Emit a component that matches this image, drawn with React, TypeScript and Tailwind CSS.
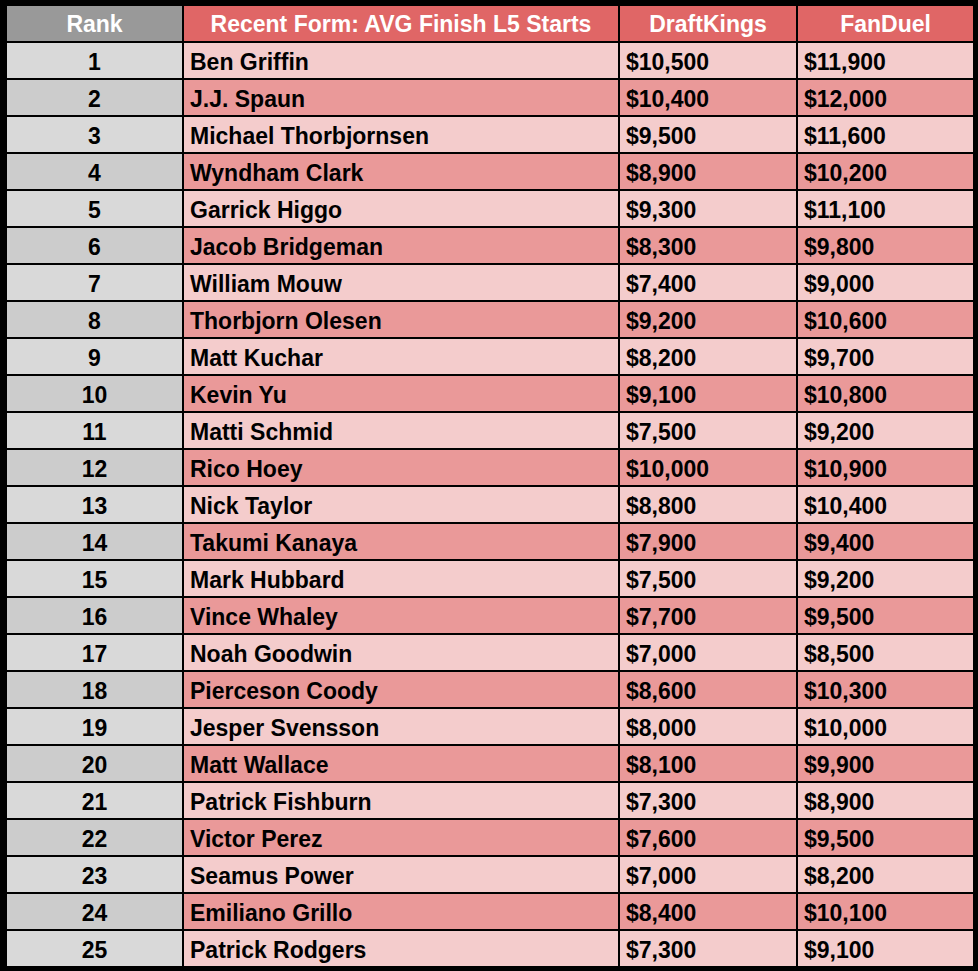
import React from 'react';

const players: [string, string, string][] = [
  ['Ben Griffin', '$10,500', '$11,900'],
  ['J.J. Spaun', '$10,400', '$12,000'],
  ['Michael Thorbjornsen', '$9,500', '$11,600'],
  ['Wyndham Clark', '$8,900', '$10,200'],
  ['Garrick Higgo', '$9,300', '$11,100'],
  ['Jacob Bridgeman', '$8,300', '$9,800'],
  ['William Mouw', '$7,400', '$9,000'],
  ['Thorbjorn Olesen', '$9,200', '$10,600'],
  ['Matt Kuchar', '$8,200', '$9,700'],
  ['Kevin Yu', '$9,100', '$10,800'],
  ['Matti Schmid', '$7,500', '$9,200'],
  ['Rico Hoey', '$10,000', '$10,900'],
  ['Nick Taylor', '$8,800', '$10,400'],
  ['Takumi Kanaya', '$7,900', '$9,400'],
  ['Mark Hubbard', '$7,500', '$9,200'],
  ['Vince Whaley', '$7,700', '$9,500'],
  ['Noah Goodwin', '$7,000', '$8,500'],
  ['Pierceson Coody', '$8,600', '$10,300'],
  ['Jesper Svensson', '$8,000', '$10,000'],
  ['Matt Wallace', '$8,100', '$9,900'],
  ['Patrick Fishburn', '$7,300', '$8,900'],
  ['Victor Perez', '$7,600', '$9,500'],
  ['Seamus Power', '$7,000', '$8,200'],
  ['Emiliano Grillo', '$8,400', '$10,100'],
  ['Patrick Rodgers', '$7,300', '$9,100'],
];

const App: React.FC = () => {
  return (
    <div className="w-[978px] h-[971px] bg-black pt-[6px] pl-[7px] pr-[5px] pb-[5px] font-['Liberation_Sans',Arial,sans-serif] font-bold text-[23px] leading-none">
      <div className="grid grid-cols-[175px_434px_176px_175px] auto-rows-[35px] gap-[2px]">
        <div className="bg-[#999999] text-white flex items-center justify-center pt-[1px]">Rank</div>
        <div className="bg-[#e06666] text-white flex items-center justify-center pt-[1px]">Recent Form: AVG Finish L5 Starts</div>
        <div className="bg-[#e06666] text-white flex items-center justify-center pt-[1px]">DraftKings</div>
        <div className="bg-[#e06666] text-white flex items-center justify-center pt-[1px]">FanDuel</div>
        {players.map(([name, dk, fd], i) => {
          const odd = i % 2 === 1;
          const cell = odd ? 'bg-[#ea9999]' : 'bg-[#f4cccc]';
          return (
            <React.Fragment key={name}>
              <div className={`${odd ? 'bg-[#cccccc]' : 'bg-[#d9d9d9]'} text-black flex items-center justify-center pt-[3px]`}>{i + 1}</div>
              <div className={`${cell} text-black flex items-center px-[6px] pt-[3px]`}>{name}</div>
              <div className={`${cell} text-black flex items-center px-[6px] pt-[3px]`}>{dk}</div>
              <div className={`${cell} text-black flex items-center px-[6px] pt-[3px]`}>{fd}</div>
            </React.Fragment>
          );
        })}
      </div>
    </div>
  );
};

export default App;
